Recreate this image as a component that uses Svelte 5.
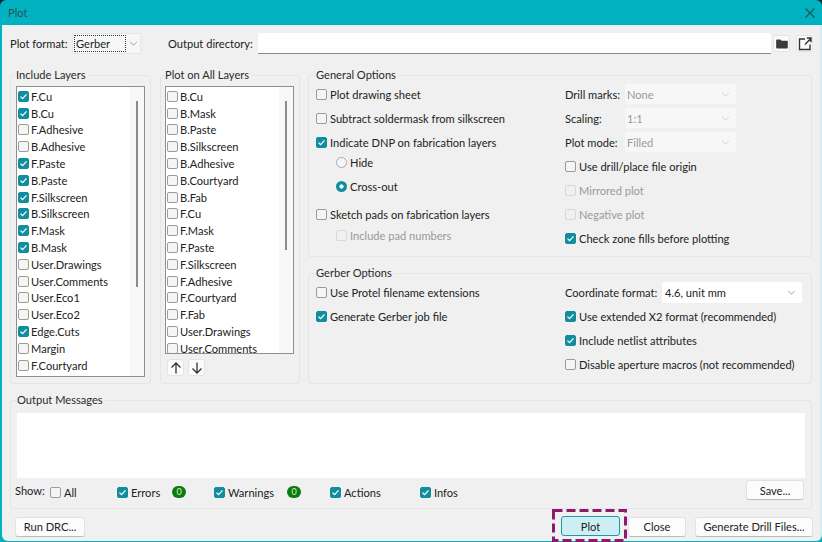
<script>
  const include = [["F.Cu",1],["B.Cu",1],["F.Adhesive",0],["B.Adhesive",0],["F.Paste",1],["B.Paste",1],["F.Silkscreen",1],["B.Silkscreen",1],["F.Mask",1],["B.Mask",1],["User.Drawings",0],["User.Comments",0],["User.Eco1",0],["User.Eco2",0],["Edge.Cuts",1],["Margin",0],["F.Courtyard",0]];
  const allLayers = ["B.Cu","B.Mask","B.Paste","B.Silkscreen","B.Adhesive","B.Courtyard","B.Fab","F.Cu","F.Mask","F.Paste","F.Silkscreen","F.Adhesive","F.Courtyard","F.Fab","User.Drawings","User.Comments"];
  const selects = [["Drill marks:","None"],["Scaling:","1:1"],["Plot mode:","Filled"]];
</script>

{#snippet box(checked, disabled = false)}
  <span class="box" class:checked class:disabled>
    {#if checked}
      <svg viewBox="0 0 11 11" width="11" height="11"><path d="M2.500 5.600 4.600 7.600 8.500 3.400" fill="none" stroke="#fff" stroke-width="1.300"/></svg>
    {/if}
  </span>
{/snippet}

{#snippet check(label, checked = false, disabled = false)}
  <div class="check" class:off={disabled}>{@render box(checked, disabled)}<span>{label}</span></div>
{/snippet}

{#snippet chevron()}
  <svg class="chev" viewBox="0 0 10 6" width="9" height="5"><path d="M1 1 5 5 9 1" fill="none" stroke="currentColor" stroke-width="1"/></svg>
{/snippet}

<div class="window">
  <header class="title">
    <span>Plot</span>
    <svg viewBox="0 0 10 10" width="10" height="10"><path d="M.5.5 9.500 9.500M9.500.5.5 9.500" stroke="#1d4f58" stroke-width="1.100"/></svg>
  </header>

  <main class="body">
    <div class="top">
      <span class="fmtl">Plot format:</span>
      <div class="format"><span class="focus">Gerber</span><span class="arrow">{@render chevron()}</span></div>
      <span class="outlabel">Output directory:</span>
      <div class="dir"></div>
      <button class="icon first" aria-label="Browse">
        <svg viewBox="0 0 14 12" width="12" height="10"><path d="M0 1.500Q0 .5 1 .5H5L6.500 2H13Q14 2 14 3V10.500Q14 11.500 13 11.500H1Q0 11.500 0 10.500Z" fill="#3b3b3b"/></svg>
      </button>
      <button class="icon" aria-label="Open">
        <svg viewBox="0 0 14 14" width="14" height="14"><path d="M7 2H1.500V12.500H12V7.500M7 7.500 12.800 1.500M8.800 1H13V5.200" fill="none" stroke="#333" stroke-width="1.400"/></svg>
      </button>
    </div>

    <div class="mid">
      <fieldset class="layers first-group">
        <legend>Include Layers</legend>
        <div class="list tall">
          {#each include as [name, on]}
            {@render check(name, !!on)}
          {/each}
          <i class="thumb one"></i>
        </div>
      </fieldset>

      <fieldset class="layers second-group">
        <legend>Plot on All Layers</legend>
        <div class="list short">
          {#each allLayers as name}
            {@render check(name)}
          {/each}
          <i class="thumb two"></i>
        </div>
        <div class="arrows">
          <button class="icon" aria-label="Up"><svg viewBox="0 0 12 12" width="12" height="12"><path d="M6 11.500V1M1.500 5.500 6 1 10.500 5.500" fill="none" stroke="#333" stroke-width="1.300"/></svg></button>
          <button class="icon" aria-label="Down"><svg viewBox="0 0 12 12" width="12" height="12"><path d="M6 .5V11M1.500 6.500 6 11 10.500 6.500" fill="none" stroke="#333" stroke-width="1.300"/></svg></button>
        </div>
      </fieldset>

      <div class="options">
        <fieldset class="general">
          <legend>General Options</legend>
          <div class="col">
            <div class="row">{@render check("Plot drawing sheet")}</div>
            <div class="row">{@render check("Subtract soldermask from silkscreen")}</div>
            <div class="row">{@render check("Indicate DNP on fabrication layers", true)}</div>
            <div class="radio"><span class="dot"></span>Hide</div>
            <div class="radio r2"><span class="dot on"></span>Cross-out</div>
            <div class="row sketch">{@render check("Sketch pads on fabrication layers")}</div>
            <div class="sub">{@render check("Include pad numbers", false, true)}</div>
          </div>
          <div class="col right">
            {#each selects as [l, v]}
              <div class="row"><span class="sl">{l}</span><div class="dis"><span>{v}</span>{@render chevron()}</div></div>
            {/each}
            <div class="row">{@render check("Use drill/place file origin")}</div>
            <div class="row">{@render check("Mirrored plot", false, true)}</div>
            <div class="row">{@render check("Negative plot", false, true)}</div>
            <div class="row">{@render check("Check zone fills before plotting", true)}</div>
          </div>
        </fieldset>

        <fieldset class="gerber">
          <legend>Gerber Options</legend>
          <div class="col">
            <div class="row">{@render check("Use Protel filename extensions")}</div>
            <div class="row">{@render check("Generate Gerber job file", true)}</div>
          </div>
          <div class="col right">
            <div class="row"><span class="cl">Coordinate format:</span><div class="coord"><span>4.6, unit mm</span>{@render chevron()}</div></div>
            <div class="row">{@render check("Use extended X2 format (recommended)", true)}</div>
            <div class="row">{@render check("Include netlist attributes", true)}</div>
            <div class="row">{@render check("Disable aperture macros (not recommended)")}</div>
          </div>
        </fieldset>
      </div>
    </div>

    <fieldset class="messages">
      <legend>Output Messages</legend>
      <div class="msgbox"></div>
      <div class="show">
        <span class="showl">Show:</span>
        <div class="w-all">{@render check("All")}</div>
        <div class="w-err">{@render check("Errors", true)}<b>0</b></div>
        <div class="w-warn">{@render check("Warnings", true)}<b>0</b></div>
        <div class="w-act">{@render check("Actions", true)}</div>
        <div class="w-inf">{@render check("Infos", true)}</div>
        <button class="btn save">Save...</button>
      </div>
    </fieldset>

    <footer class="foot">
      <button class="btn drc">Run DRC...</button>
      <div class="plotwrap">
        <svg class="dash" viewBox="0 0 75 33" width="75" height="33"><rect x="1.500" y="1.500" width="72" height="30" fill="none" stroke="#8e1a6f" stroke-width="3" stroke-dasharray="9 4"/></svg>
        <button class="btn plot">Plot</button>
      </div>
      <button class="btn close">Close</button>
      <button class="btn drill">Generate Drill Files...</button>
    </footer>
  </main>
</div>

<style>
  :global(body) { margin: 0; background: #12262b; }
  .window { width: 822px; height: 542px; overflow: hidden; display: flex; flex-direction: column; font: 11.100px "Lato", "Open Sans", sans-serif; color: #222; background: #00b2c0; border-radius: 6px 6px 0 0; }
  .title { height: 25px; flex: none; display: flex; align-items: center; justify-content: space-between; padding: 0 7px 0 8px; color: #24545c; }
  .body { flex: 1; margin: 0 0 1px 2px; background: #f0f0f0; border-right: 2px solid #d3eef0; border-radius: 0 0 6px 6px; display: flex; flex-direction: column; min-height: 0; }
  .top { height: 21px; margin-top: 8px; padding-left: 8px; padding-right: 7px; display: flex; align-items: center; }
  .fmtl { width: 62px; white-space: nowrap; }
  .format { width: 69px; height: 21px; display: flex; align-items: center; background: #f7f7f7; border: 1px solid #e6e6e6; box-sizing: border-box; padding-left: 1px; }
  .focus { width: 52px; height: 17px; border: 1px dotted #333; box-sizing: border-box; padding-left: 1px; line-height: 15px; }
  .arrow { flex: 1; display: flex; align-items: center; justify-content: center; color: #888; }
  .outlabel { margin-left: 27px; width: 90px; white-space: nowrap; }
  .dir { flex: 1; height: 21px; background: #fff; border-bottom: 1px solid #8a8a8a; box-sizing: border-box; border-radius: 3px 3px 0 0; }
  .icon { width: 17px; height: 17px; padding: 0; margin-left: 6px; display: flex; align-items: center; justify-content: center; background: #fbfbfb; border: 1px solid #e4e4e4; border-radius: 3px; }
  .icon.first { margin-left: 2px; }
  fieldset { margin: 0; padding: 0; border: 1px solid #e5e5e5; border-radius: 3px; min-width: 0; }
  legend { padding: 0 2px 0 1px; margin-left: -1px; line-height: 14px; color: #2a2a2a; }
  .mid { margin-top: 14px; margin-left: 8px; margin-right: 8px; display: flex; align-items: stretch; }
  .layers { width: 141px; height: 316px; box-sizing: border-box; padding: 4px 5px 0 5px; }
  .first-group { margin-right: 9px; }
  .second-group { width: 140px; margin-right: 9px; padding: 4px 5px 0 4px; }
  .list { position: relative; box-sizing: border-box; background: #fff; border: 1px solid #8f8f8f; padding: 1px 0 0 1px; overflow: hidden; display: flex; flex-direction: column; }
  .list::after { content: ""; position: absolute; top: 0; bottom: 0; right: 0; width: 14px; background: #f8f8f8; }
  .list .check { height: 16.800px; flex: none; gap: 2px; }
  .tall { height: 291px; }
  .short { height: 268px; }
  .thumb { position: absolute; z-index: 1; right: 6px; width: 2px; background: #8c8c8c; }
  .one { top: 14px; height: 186px; }
  .two { top: 14px; height: 149px; }
  .arrows { display: flex; gap: 4px; margin: 5px 0 0 2px; }
  .arrows .icon { margin: 0; width: 17px; }
  .check { display: flex; align-items: center; gap: 3px; white-space: nowrap; }
  .check.off { color: #9a9a9a; }
  .box { width: 11px; height: 11px; box-sizing: border-box; flex: none; display: flex; border: 1px solid #9b9b9b; border-radius: 2px; background: #f5f5f5; }
  .box.checked { background: #118da0; border-color: #118da0; }
  .box.disabled { border-color: #d8d8d8; background: #f0f0f0; }
  .box svg { margin: -1px; }
  .options { flex: 1; min-width: 0; display: flex; flex-direction: column; gap: 9px; margin-left: -1px; }
  .general { height: 189px; display: flex; box-sizing: border-box; padding: 0 0 0 7px; }
  .gerber { height: 118px; display: flex; box-sizing: border-box; padding: 0 0 0 7px; }
  .col { width: 249px; flex: none; display: flex; flex-direction: column; }
  .right { flex: 1; width: auto; }
  .row { height: 24px; flex: none; display: flex; align-items: center; }
  .radio { height: 20px; margin-top: -2px; padding-left: 20px; display: flex; align-items: center; gap: 3px; flex: none; }
  .r2 { height: 24px; margin-top: 2px; }
  .sketch { margin-top: 3px; height: 26px; }
  .sub { height: 18px; margin-top: -1px; padding-left: 20px; display: flex; align-items: center; flex: none; }
  .dot { width: 11px; height: 11px; box-sizing: border-box; border: 1px solid #aaa; border-radius: 50%; background: #f6f6f6; }
  .dot.on { border: 0; background: radial-gradient(circle, #fff 0 1.800px, #118da0 2.400px); }
  .sl { width: 60px; white-space: nowrap; }
  .dis { width: 111px; height: 20px; background: #f7f7f7; color: #999; display: flex; align-items: center; justify-content: space-between; box-sizing: border-box; padding: 0 6px 0 2px; }
  .dis .chev { color: #ccc; }
  .cl { width: 97px; white-space: nowrap; }
  .coord { width: 140px; height: 21px; background: #fff; box-sizing: border-box; display: flex; align-items: center; justify-content: space-between; padding: 0 6px 0 3px; border-radius: 2px; }
  .coord .chev { color: #888; }
  .messages { margin: 9px 8px 0 8px; height: 117px; box-sizing: border-box; padding: 6px 6px 0 6px; }
  .msgbox { height: 65px; background: #fff; }
  .show { height: 28px; display: flex; align-items: center; }
  .show > div { display: flex; align-items: center; }
  .showl { width: 35px; margin: -3px 0 0 -2px; }
  .w-all { width: 67px; }
  .w-err { width: 97px; }
  .w-warn { width: 116px; }
  .w-err .check { width: 55px; }
  .w-warn .check { width: 73px; }
  .w-act { width: 90px; }
  .w-inf { flex: 1; }
  b { width: 14px; height: 12px; margin-top: -1px; border-radius: 7px; background: #0c7a12; color: #d8f0a8; font-size: 9px; font-weight: 400; line-height: 12px; text-align: center; }
  .btn { height: 20px; padding: 0; font: inherit; color: #222; background: #fcfcfc; border: 1px solid #e2e2e2; border-bottom-color: #bcbcbc; border-radius: 3px; }
  .save { width: 58px; margin-right: 1px; margin-top: -4px; }
  .foot { margin-top: 2px; height: 30px; padding: 0 7px 0 13px; display: flex; align-items: center; }
  .drc { width: 70px; margin-top: 1px; }
  .plotwrap { position: relative; margin-left: auto; width: 75px; height: 30px; display: flex; align-items: center; justify-content: flex-end; padding-right: 7px; box-sizing: border-box; }
  .dash { position: absolute; left: 0; top: -2px; }
  .plot { width: 59px; background: #cdeff3; border: 1px solid #1d98a8; }
  .close { width: 58px; margin-left: 1px; margin-top: 1px; }
  .drill { width: 118px; margin-left: 9px; margin-top: 1px; }
</style>
